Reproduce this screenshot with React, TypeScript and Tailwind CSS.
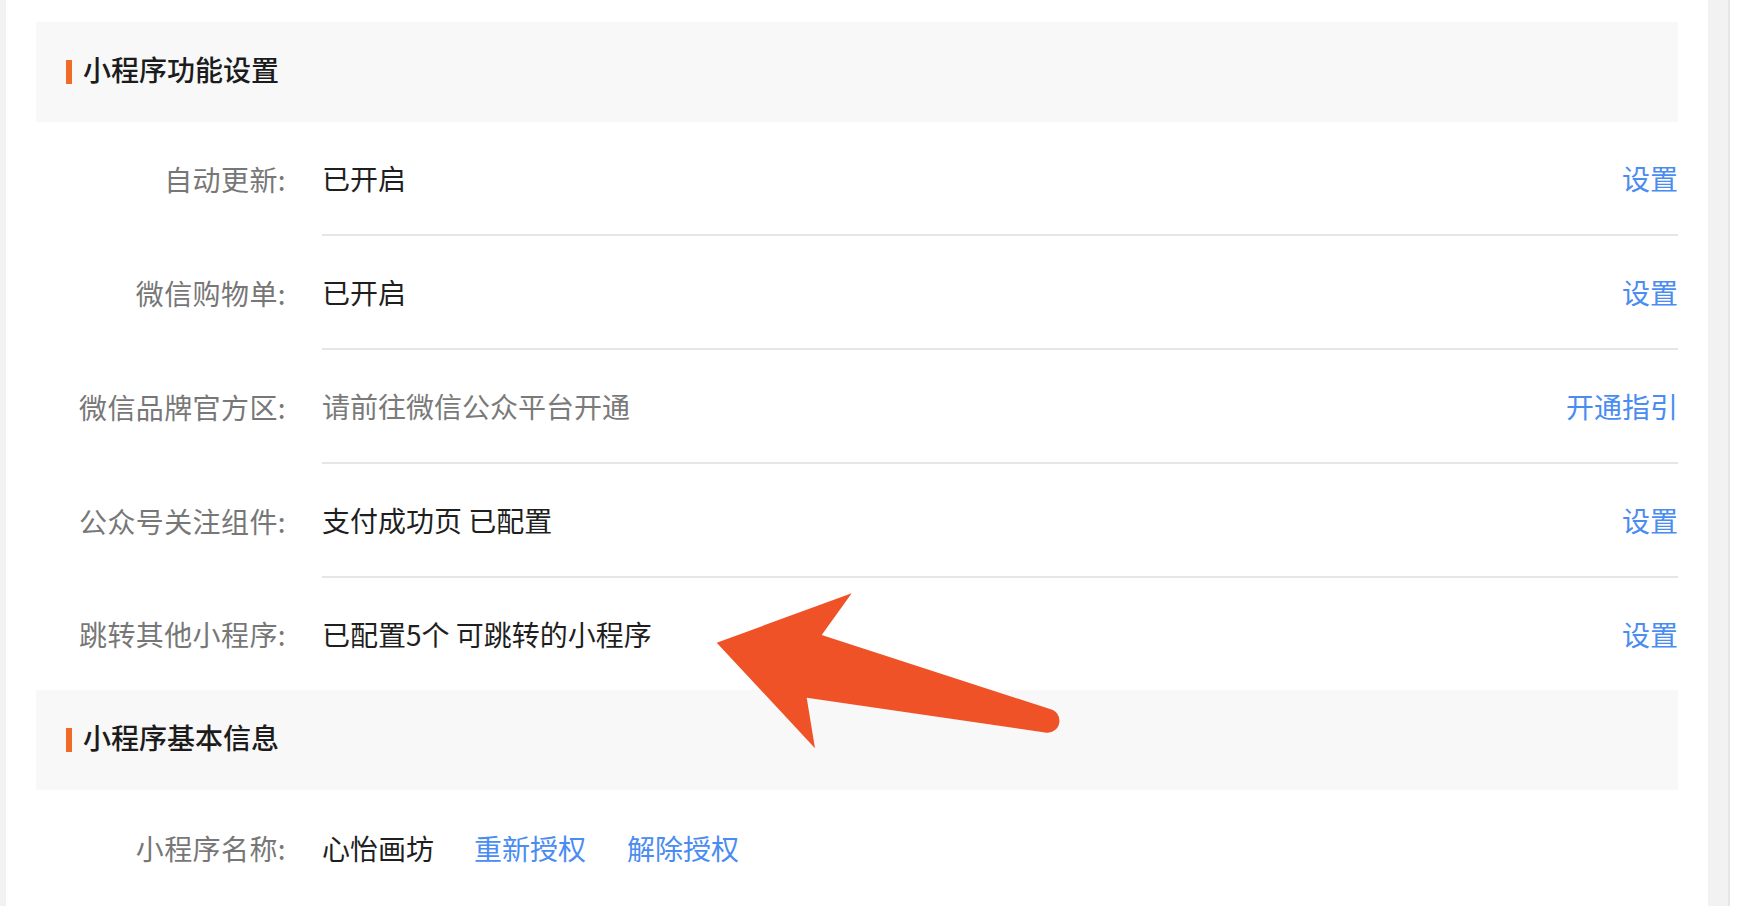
import React from "react";

const font = { fontFamily: '"Noto Sans CJK SC", "Noto Sans", sans-serif' };

function Header({ title }: { title: string }) {
  return (
    <div className="h-[100px] bg-[#f8f8f8] flex items-center pl-[30px]">
      <div className="w-[6px] h-[24px] bg-[#f06b2a]" />
      <div className="ml-[11px] -mt-[6px] text-[28px] leading-none font-medium text-[#1c1c1c]">{title}</div>
    </div>
  );
}

function Row({
  label,
  value,
  link,
  muted,
  border = true,
  h = "h-[114px]",
}: {
  label: string;
  value: React.ReactNode;
  link?: string;
  muted?: boolean;
  border?: boolean;
  h?: string;
}) {
  return (
    <div className={`flex ${h}`}>
      <div className="w-[250px] flex items-center justify-end text-[28px] leading-none tracking-[0.4px] text-[#777777]">
        {label}
      </div>
      <div
        className={`ml-[36px] flex-1 flex items-center justify-between ${
          border ? "border-b-2 border-[#e6e6e6]" : ""
        }`}
      >
        <div className={`text-[28px] leading-none ${muted ? "text-[#7a7a7a]" : "text-[#1f1f1f]"}`}>{value}</div>
        {link && <div className="text-[28px] leading-none text-[#4a8cf2]">{link}</div>}
      </div>
    </div>
  );
}

export default function App() {
  return (
    <div className="relative w-[1742px] h-[906px] overflow-hidden flex bg-white" style={font}>
      <div className="w-[6px] bg-[#f2f2f2]" />
      <div className="flex-1 px-[30px] pt-[22px]">
        <Header title="小程序功能设置" />
        <Row label="自动更新:" value="已开启" link="设置" />
        <Row label="微信购物单:" value="已开启" link="设置" />
        <Row label="微信品牌官方区:" value="请前往微信公众平台开通" link="开通指引" muted />
        <Row label="公众号关注组件:" value="支付成功页 已配置" link="设置" />
        <Row label="跳转其他小程序:" value="已配置5个 可跳转的小程序" link="设置" border={false} h="h-[112px]" />
        <Header title="小程序基本信息" />
        <Row
          label="小程序名称:"
          value={
            <span className="flex items-center">
              <span>心怡画坊</span>
              <span className="ml-[40px] text-[#4a8cf2]">重新授权</span>
              <span className="ml-[41px] text-[#4a8cf2]">解除授权</span>
            </span>
          }
          border={false}
          h="h-[116px]"
        />
      </div>
      <div className="w-[20px] bg-[#f2f2f2]" />
      <div className="w-[2px] bg-[#e6e6e6]" />
      <div className="w-[12px] bg-white" />
      <svg className="absolute left-0 top-0 pointer-events-none" width="1742" height="906" viewBox="0 0 1742 906">
        <path
          d="M716.7 642.7 L851.7 593.3 L821.7 635 L1050 709 A12 12 0 0 1 1046.7 732.7 L806.7 697.7 L815 748.3 Z"
          fill="#f05228"
        />
      </svg>
    </div>
  );
}
